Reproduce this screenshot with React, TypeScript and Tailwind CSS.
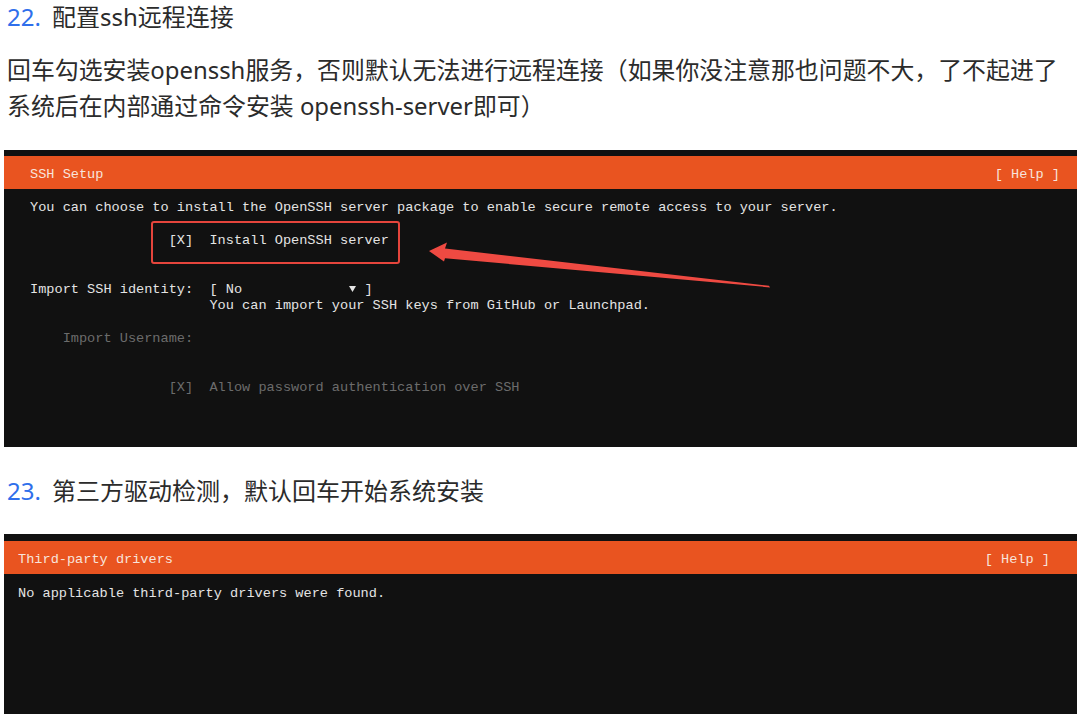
import React from 'react';

const mono = "font-['Liberation_Mono','DejaVu_Sans_Mono',monospace] text-[13.6px]";
const cjk = "font-['Noto_Sans','Noto_Sans_CJK_SC',sans-serif]";

const Row = ({ children, className = '' }: { children?: React.ReactNode; className?: string }) => (
  <div className={`h-[16.4px] leading-[16.4px] whitespace-pre ${className}`}>{children}</div>
);

const Heading = ({ num, text, className = '' }: { num: string; text: string; className?: string }) => (
  <div className={`flex gap-[11px] px-[7px] text-[24px] text-[#2b2b2b] ${className}`}>
    <span className="text-[#2f6feb]">{num}</span>
    <span>{text}</span>
  </div>
);

const TermHeader = ({ title, padL, padR }: { title: string; padL: string; padR: string }) => (
  <div className={`flex h-[33px] items-center justify-between bg-[#e95420] pt-[5px] text-[#f8e4dc] ${padL} ${padR}`}>
    <span className="whitespace-pre">{title}</span>
    <span className="whitespace-pre">[ Help ]</span>
  </div>
);

const Caret = () => (
  <span className="inline-flex w-[8.16px] justify-center align-middle">
    <svg width="7" height="6" viewBox="0 0 7 6">
      <polygon points="0,0 7,0 3.5,6" fill="#e4e4e4" />
    </svg>
  </span>
);

export default function App() {
  return (
    <div className={`h-[714px] w-[1077px] overflow-hidden bg-white ${cjk}`}>
      <Heading num="22." text="配置ssh远程连接" className="h-[34px] leading-[34px]" />

      <p className="mt-[18px] px-[7px] text-[23.9px] leading-[36px] text-[#2b2b2b] whitespace-nowrap">
        回车勾选安装openssh服务，否则默认无法进行远程连接（如果你没注意那也问题不大，了不起进了
        <br />
        系统后在内部通过命令安装 openssh-server即可）
      </p>

      {/* SSH Setup screen */}
      <div className={`relative mt-[26px] ml-[4px] h-[297px] bg-[#111111] ${mono}`}>
        <div className="h-[6px]" />
        <TermHeader title="SSH Setup" padL="pl-[26px]" padR="pr-[17px]" />
        <div className="pt-[10.8px] pl-[26px] text-[#e4e4e4]">
          <Row>You can choose to install the OpenSSH server package to enable secure remote access to your server.</Row>
          <Row />
          <Row>{'                 [X]  Install OpenSSH server'}</Row>
          <Row />
          <Row />
          <Row>
            {'Import SSH identity:  [ No             '}
            <Caret />
            {' ]'}
          </Row>
          <Row>{'                      You can import your SSH keys from GitHub or Launchpad.'}</Row>
          <Row />
          <Row className="text-[#6c6c6c]">{'    Import Username:'}</Row>
          <Row />
          <Row />
          <Row className="text-[#6c6c6c]">{'                 [X]  Allow password authentication over SSH'}</Row>
        </div>

        {/* annotation */}
        <div className="pointer-events-none absolute left-[147px] top-[71px] h-[43px] w-[249px] rounded-[3px] border-2 border-[#e5453c]" />
        <svg className="pointer-events-none absolute left-0 top-0" width="1073" height="297">
          <polygon
            points="425,101 443,92.5 441,98.5 765,135.8 766,137.4 441,108.3 440,111.5"
            fill="#ef4a42"
          />
        </svg>
      </div>

      <Heading num="23." text="第三方驱动检测，默认回车开始系统安装" className="mt-[26px] h-[36px] leading-[36px]" />

      {/* Third-party drivers screen */}
      <div className={`mt-[25px] ml-[4px] h-[180px] bg-[#111111] ${mono}`}>
        <div className="h-[7px]" />
        <TermHeader title="Third-party drivers" padL="pl-[14px]" padR="pr-[27px]" />
        <div className="pt-[11.8px] pl-[14px] text-[#e4e4e4]">
          <Row>No applicable third-party drivers were found.</Row>
        </div>
      </div>
    </div>
  );
}
